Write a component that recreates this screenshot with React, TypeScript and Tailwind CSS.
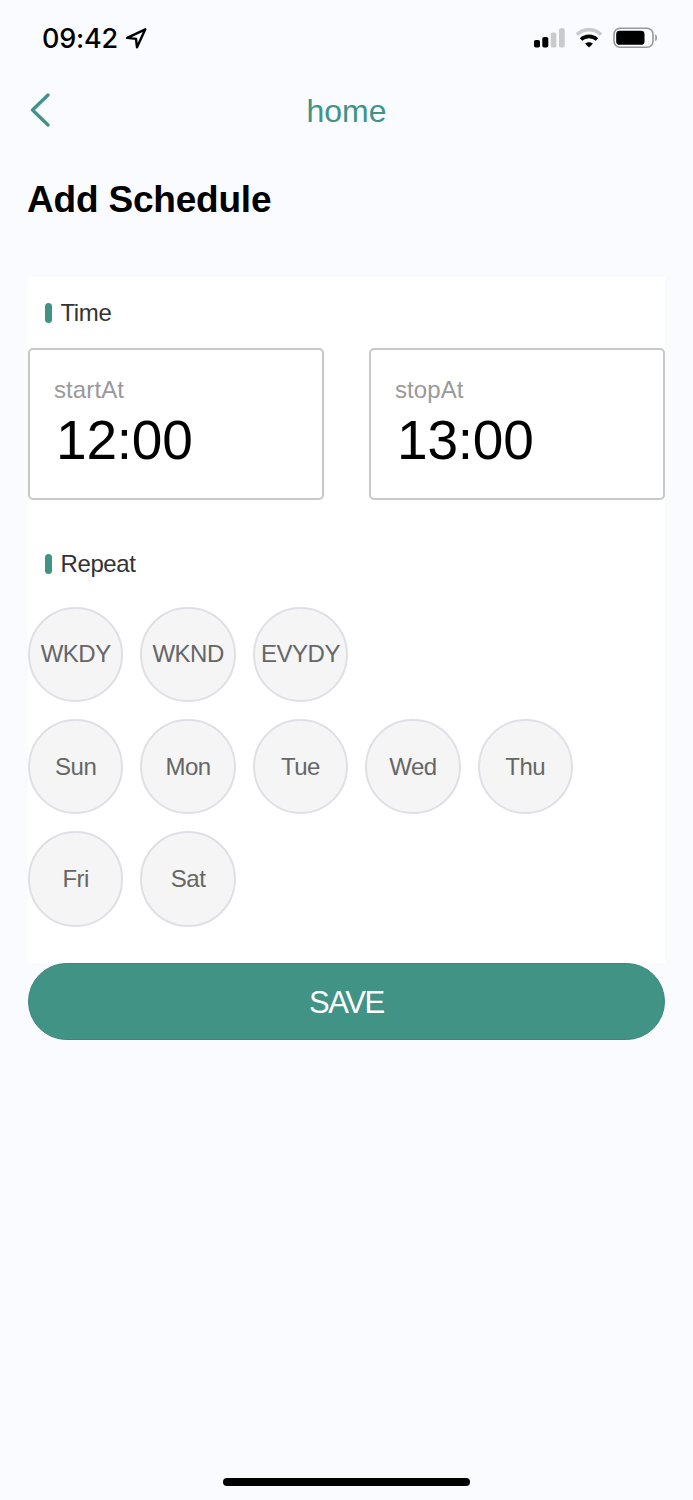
const presets = ['WKDY', 'WKND', 'EVYDY']
const days = ['Sun', 'Mon', 'Tue', 'Wed', 'Thu', 'Fri', 'Sat']

function StatusBar() {
  return (
    <div className="flex h-[76px] items-center justify-between pl-[42px] pr-[35px]">
      <div className="flex items-center">
        <span className="w-[76px] whitespace-nowrap pt-0.5 font-[Inter,sans-serif] text-[27px] font-medium leading-8 tracking-[-0.2px]">
          09:42
        </span>
        <svg className="ml-[7px]" width="23" height="23" viewBox="0 0 23 23" fill="none">
          <path
            d="M20.3 2.3 2.2 10.9 11 11.9 12 20.3Z"
            stroke="#000"
            strokeWidth="2.4"
            strokeLinejoin="round"
          />
        </svg>
      </div>
      <div className="flex items-center">
        <svg width="32" height="20" viewBox="0 0 32 20">
          <rect x="0" y="12" width="6" height="7.6" rx="1.8" />
          <rect x="8.3" y="9" width="6" height="10.6" rx="1.8" />
          <rect x="16.8" y="4.5" width="5.6" height="15.1" rx="1.8" fill="#cacacd" />
          <rect x="25" y="0.2" width="5.8" height="19.4" rx="1.8" fill="#cacacd" />
        </svg>
        <svg className="ml-[9px]" width="28" height="20" viewBox="0 0 28 20" fill="none">
          <path d="M1.9 6.6C8.9.1 19.1.1 26.1 6.6" stroke="#cacacd" strokeWidth="3.6" />
          <path d="M6 11.5c4.5-4.2 11.5-4.2 16 0" stroke="#000" strokeWidth="3.6" />
          <path d="M14 19.6 10.1 15.8c2.2-2 5.6-2 7.8 0Z" fill="#000" />
        </svg>
        <svg className="ml-2.5" width="45" height="22" viewBox="0 0 45 22">
          <rect x="1" y="1.2" width="39" height="19" rx="6" fill="none" stroke="#98989c" strokeWidth="1.6" />
          <rect x="3.2" y="3.8" width="28.3" height="14" rx="3.4" />
          <path d="M42.2 7.3v7c2.5-1.2 2.5-5.8 0-7Z" fill="#98989c" />
        </svg>
      </div>
    </div>
  )
}

function SectionLabel({ children }: { children: string }) {
  return (
    <div className="flex h-8 items-center pl-[16.5px]">
      <span className="h-5 w-[7px] rounded-full bg-[#419386]" />
      <span className="ml-[9px] text-[24px] leading-8 tracking-[-0.4px] text-[#333]">{children}</span>
    </div>
  )
}

function TimeBox({ label, value }: { label: string; value: string }) {
  return (
    <div className="h-[152px] w-[296px] rounded-[5px] border-2 border-[#c8c8c8] pl-6 pt-6">
      <div className="text-[24px] leading-8 tracking-[0.1px] text-[#999]">{label}</div>
      <div className="ml-0.5 mt-0.5 text-[55px] leading-[64px] tracking-[-0.2px] text-black">{value}</div>
    </div>
  )
}

function Chips({ items }: { items: string[] }) {
  return (
    <div className="flex flex-wrap gap-[17px]">
      {items.map((item) => (
        <button
          key={item}
          className="flex size-[95.4px] items-center justify-center rounded-full border-2 border-[#dfdfe6] bg-[#f5f5f5] text-[24px] tracking-[-0.5px] text-[#666]"
        >
          {item}
        </button>
      ))}
    </div>
  )
}

export default function App() {
  return (
    <div className="flex h-[1500px] w-[693px] flex-col bg-[#fafbff] font-['Liberation_Sans',Arial,sans-serif] text-black">
      <StatusBar />
      <header className="grid h-[70px] grid-cols-[1fr_auto_1fr] items-center px-[30px]">
        <svg className="mb-[3px]" width="21" height="34" viewBox="0 0 21 34" fill="none">
          <path
            d="M18 2 2.5 17 18 32"
            stroke="#419386"
            strokeWidth="3.3"
            strokeLinecap="round"
            strokeLinejoin="round"
          />
        </svg>
        <span className="text-[32px] leading-9 text-[#419386]">home</span>
      </header>
      <main className="flex flex-col px-7">
        <h1 className="-ml-px mt-8 text-[37px] font-bold leading-[44px] tracking-[-0.2px]">Add Schedule</h1>
        <section className="mt-[55px] h-[686px] bg-white pt-5">
          <SectionLabel>Time</SectionLabel>
          <div className="mt-[19px] flex justify-between">
            <TimeBox label="startAt" value="12:00" />
            <TimeBox label="stopAt" value="13:00" />
          </div>
          <div className="mt-12">
            <SectionLabel>Repeat</SectionLabel>
          </div>
          <div className="mt-[26.5px] flex flex-col gap-[17px]">
            <Chips items={presets} />
            <Chips items={days} />
          </div>
        </section>
        <button className="h-[77px] rounded-full border border-[#3a8478] bg-[#419386] pt-1 text-[31px] tracking-[-1.4px] text-white">
          SAVE
        </button>
      </main>
      <div className="mx-auto mb-3.5 mt-auto h-2 w-[247px] rounded-full bg-black" />
    </div>
  )
}
